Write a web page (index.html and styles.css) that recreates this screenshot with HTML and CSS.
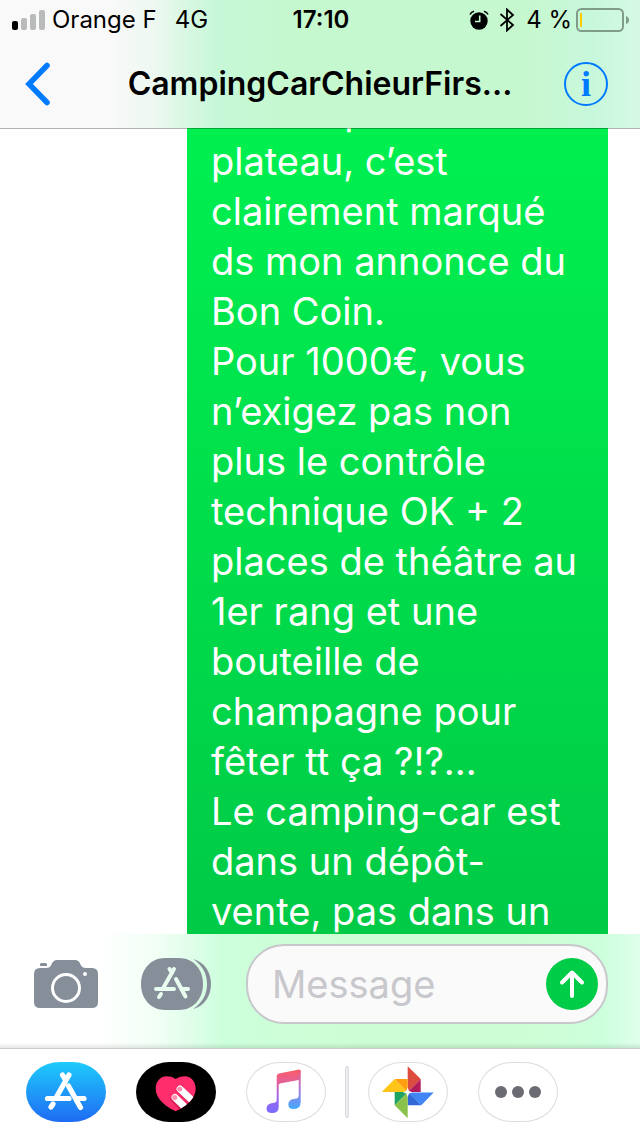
FILE: index.html
```html
<!DOCTYPE html>
<html lang="fr">
<head>
<meta charset="utf-8">
<meta name="viewport" content="width=device-width, initial-scale=1">
<title>CampingCarChieurFirst</title>
<link rel="stylesheet" href="styles.css">
</head>
<body>
<svg class="defs" aria-hidden="true">
  <defs>
    <linearGradient id="note" x1="0" y1="0" x2="0" y2="1">
      <stop offset="0" stop-color="#fb5c64"/><stop offset=".3" stop-color="#e2619b"/><stop offset=".65" stop-color="#9a68f0"/><stop offset="1" stop-color="#7a6cff"/>
    </linearGradient>
    <linearGradient id="note-right" x1="0" y1="0" x2="0" y2="1">
      <stop offset="0" stop-color="#f0567a"/><stop offset=".5" stop-color="#a77fe0"/><stop offset="1" stop-color="#3fa9ff"/>
    </linearGradient>
    <clipPath id="heart"><path d="M39.700 17C42.500 15 46 14.300 49 14.300C55.500 14.300 59.700 20 59.700 26.500C59.700 38 47 46 39.700 49.300C32.400 46 19.700 38 19.700 26.500C19.700 20 24 14.300 30.400 14.300C33.400 14.300 37 15 39.700 17Z"/></clipPath>
  </defs>
</svg>

<header class="top">
  <div class="status">
    <div class="status-left">
      <svg class="signal" width="34" height="20" viewBox="0 0 34 20" aria-hidden="true">
        <rect x="0" y="11" width="6" height="9" rx="2"/>
        <g fill="#b9bbba"><rect x="9" y="8" width="6" height="12" rx="2"/><rect x="18" y="4" width="6" height="16" rx="2"/><rect x="27" y="0" width="6" height="20" rx="2"/></g>
      </svg>
      <span>Orange F</span><span class="network">4G</span>
    </div>
    <time class="clock">17:10</time>
    <div class="status-right">
      <svg width="20" height="20" viewBox="0 0 20 20" aria-hidden="true">
        <circle cx="10" cy="11" r="8.700"/>
        <path d="M1 4.500Q2 2 5 1.200M19 4.500Q18 2 15 1.200" fill="none" stroke="#000" stroke-width="1.600"/>
        <path d="M10.700 5.500V11.500H6" fill="none" stroke="#c6f8cf" stroke-width="1.600"/>
      </svg>
      <svg class="bluetooth" width="16" height="24" viewBox="0 0 16 24" aria-hidden="true">
        <path d="M1.500 6L14 17L8 22.500V1.500L14 7L1.500 18" fill="none" stroke="#000" stroke-width="1.800"/>
      </svg>
      <span>4 %</span>
      <svg class="battery" width="54" height="24" viewBox="0 0 54 24" aria-hidden="true">
        <rect x="1" y="1" width="46" height="22" rx="4.500" fill="none" stroke="#829c8a" stroke-width="2"/>
        <rect x="4" y="5" width="2" height="14" fill="#ffcc00"/>
        <path d="M50 8Q53 9 53 12Q53 15 50 16Z" fill="#829c8a"/>
      </svg>
    </div>
  </div>
  <nav class="nav">
    <button class="icon-button back" aria-label="Retour">
      <svg width="26" height="44" viewBox="0 0 26 44"><path d="M23 3.500L5 22L23 40.500" fill="none" stroke="#007aff" stroke-width="5.500" stroke-linecap="round" stroke-linejoin="miter"/></svg>
    </button>
    <h1 class="title">CampingCarChieurFirs...</h1>
    <button class="info" aria-label="Informations">i</button>
  </nav>
</header>

<main class="thread">
  <p class="bubble">voir un petit<br>plateau, c’est<br>clairement marqué<br>ds mon annonce du<br>Bon Coin.<br>Pour 1000€, vous<br>n’exigez pas non<br>plus le contrôle<br>technique OK + 2<br>places de théâtre au<br>1er rang et une<br>bouteille de<br>champagne pour<br>fêter tt ça ?!?...<br>Le camping-car est<br>dans un dépôt-<br>vente, pas dans un</p>
</main>

<form class="compose">
  <button type="button" class="icon-button" aria-label="Appareil photo">
    <svg width="64" height="48" viewBox="0 0 64 48">
      <path fill="#868e99" d="M6 8H12Q16 8 17.500 4.500Q19 0 23 0H41Q45 0 46.500 4.500Q48 8 52 8H58Q64 8 64 14V42Q64 48 58 48H6Q0 48 0 42V14Q0 8 6 8ZM6 6V4.500Q6 3 7.500 3H11.500Q13 3 13 4.500V6Z"/>
      <circle cx="32" cy="28" r="13.500" fill="none" stroke="#fff" stroke-width="3"/>
      <circle cx="51" cy="14" r="2" fill="#fff"/>
    </svg>
  </button>
  <button type="button" class="icon-button apps" aria-label="Apps">
    <svg width="70" height="52" viewBox="0 0 70 52">
      <path fill="#868e99" d="M24 0H38C52 0 62 11 62 26S52 52 38 52H24C10 52 0 41 0 26S10 0 24 0Z"/>
      <path fill="#868e99" d="M52 1C64 4 70 15 70 26S64 48 52 51C61 45 66 37 66 26S61 7 52 1Z"/>
      <g fill="none" stroke="#e8fdef" stroke-width="4" stroke-linecap="round">
        <path d="M33 11L22.500 29.500M28.500 11L31 15M15 31H33M41 31H47M20 36L18 39"/>
        <path d="M35 21L44.500 38.500"/>
      </g>
    </svg>
  </button>
  <div class="field">
    <input class="field-input" type="text" placeholder="Message" aria-label="Message">
    <button type="submit" class="send" aria-label="Envoyer">
      <svg width="28" height="30" viewBox="0 0 28 30"><path d="M14 27V4M4 13.500L14 3.500L24 13.500" fill="none" stroke="#fff" stroke-width="4" stroke-linecap="round" stroke-linejoin="round"/></svg>
    </button>
  </div>
</form>

<footer class="drawer">
  <button class="app app-store" aria-label="App Store">
    <svg width="80" height="60" viewBox="0 0 80 60"><g fill="none" stroke="#fff" stroke-width="5.200" stroke-linecap="round">
      <path d="M43 13L31 34M36.500 13L39.500 18M21.500 36.500H43M52 36.500H58M27 42L25 45"/><path d="M42.500 24L54.500 45.500"/></g></svg>
  </button>
  <button class="app app-touch" aria-label="Digital Touch">
    <svg width="80" height="60" viewBox="0 0 80 60"><g clip-path="url(#heart)">
      <rect width="80" height="60" fill="#ff2d6b"/>
      <g stroke-width="8" stroke-linecap="round"><path d="M44 27L62 45" stroke="#d51e55"/><path d="M38.500 37L56 54" stroke="#d51e55"/>
      <path d="M44 27L62 44M39 35.500L57 53" stroke="#fff" stroke-width="7"/></g>
      <circle cx="43.700" cy="27" r="2.500" fill="#ff8fb0"/><circle cx="38.700" cy="35.500" r="2.500" fill="#ff8fb0"/></g></svg>
  </button>
  <button class="app" aria-label="Musique">
    <svg width="80" height="60" viewBox="0 0 80 60">
      <path fill="url(#note)" d="M30.700 14Q30.700 12 33 11.500L53 7.500Q54.700 7.300 54.700 9L52.700 18L34 21.500Q32.700 22 32.700 23V45Q32.700 51 26 51Q20.500 51 20.500 46.500Q20.500 41.500 27 41Q30.700 40.500 30.700 38Z"/>
      <path fill="url(#note-right)" d="M54.700 9V40Q54.700 47 48 47Q42.300 47 42.300 42.500Q42.300 37.500 49 36.800Q52.700 36.400 52.700 33.500V9Z"/>
    </svg>
  </button>
  <span class="divider"></span>
  <button class="app" aria-label="Google Photos">
    <svg width="80" height="60" viewBox="0 0 80 60">
      <path fill="#db4c3f" d="M39.700 4.300L52.700 17L39.700 30Z"/><path fill="#b31b5c" d="M52.700 17V30H39.700Z"/>
      <path fill="#4285f4" d="M39.700 30.500H65.700L53.300 43.300Z"/><path fill="#3367d6" d="M39.700 30L53.300 43.300H39.700Z"/>
      <path fill="#8bc34a" d="M39.700 30V56.300L26.700 43.300Z"/><path fill="#1da362" d="M39.700 30L26.700 43.300V30Z"/>
      <path fill="#ffc518" d="M39.700 30H13.700L26.700 17Z"/><path fill="#ff9e0f" d="M39.700 30L26.700 17H39.700Z"/>
      <path fill="#fff" d="M39.700 25.500L41 29L44.500 30.200L41 31.500L39.700 35L38.400 31.500L35 30.200L38.400 29Z"/>
    </svg>
  </button>
  <button class="app" aria-label="Plus">
    <svg width="80" height="60" viewBox="0 0 80 60" fill="#6b6b73"><circle cx="23" cy="30" r="6"/><circle cx="40" cy="30" r="6"/><circle cx="57" cy="30" r="6"/></svg>
  </button>
</footer>
</body>
</html>
```

FILE: styles.css
```css
* { box-sizing: border-box; }

body {
  margin: 0;
  height: 100vh;
  display: flex;
  flex-direction: column;
  overflow: hidden;
  background: #fff;
  color: #000;
  font-family: Inter, "Liberation Sans", sans-serif;
}

button {
  padding: 0;
  border: 0;
  background: none;
  font: inherit;
  cursor: pointer;
}

svg { display: block; flex: none; }

.defs { position: absolute; width: 0; height: 0; }

.top {
  position: relative;
  z-index: 1;
  flex: none;
  background: linear-gradient(90deg, #f9f9f9 17%, #eef8f1 24%, #d9f8e3 29%, #c6f8d8 34%, #c6f8cf 45%, #c6f8cf 82%, #c8f8dc 93%, #d6f8e5 100%);
  box-shadow: 0 1px rgba(0, 0, 0, 0.3);
}

.status {
  display: grid;
  grid-template-columns: 1fr auto 1fr;
  align-items: center;
  height: 40px;
  padding: 0 10px 0 12px;
  font-size: 24px;
  line-height: 40px;
  white-space: nowrap;
}

.status-left, .status-right { display: flex; align-items: center; }
.status-left { gap: 6px; }
.status-right { justify-content: flex-end; }
.network { margin-left: 12px; }
.clock { font-weight: 600; }
.bluetooth { margin: 0 11px 0 10px; }
.battery { margin-left: 4px; }

.nav {
  display: flex;
  align-items: center;
  height: 88px;
  padding: 0 32px 0 24px;
}

.back { width: 52px; }

.title {
  flex: 1;
  margin: 0;
  font-size: 32px;
  font-weight: 600;
  line-height: 40px;
  text-align: center;
  white-space: nowrap;
}

.info {
  width: 44px;
  height: 44px;
  border: 2px solid #007aff;
  border-radius: 50%;
  color: #007aff;
  font: bold 36px/38px "Liberation Serif", serif;
}

.thread {
  display: flex;
  flex: 1;
  justify-content: flex-end;
  min-height: 0;
  margin-top: -42px;
  padding-right: 32px;
}

.bubble {
  width: 421px;
  margin: 0;
  padding: 0 24px;
  overflow: hidden;
  background: linear-gradient(#00f250, #00ca46);
  color: #fff;
  font-size: 38px;
  line-height: 50px;
  white-space: nowrap;
}

.compose {
  position: relative;
  display: flex;
  flex: none;
  align-items: center;
  padding: 10px 32px 24px 34px;
  background:
    linear-gradient(transparent calc(100% - 5px), rgba(0, 0, 0, 0.1)),
    linear-gradient(90deg, #fff 15%, #f3fff6 24%, #dffee9 30%, #ccffdc 35%, #cdfdd2 55%, #cdfdd2 80%, #ccffdc 94%, #dfffec 100%);
}

.icon-button { flex: none; }
.apps { margin: 0 35px 0 43px; }

.field {
  display: flex;
  flex: 1;
  align-items: center;
  min-width: 0;
  height: 80px;
  padding: 0 8px 0 24px;
  border: 2px solid #c7c7cc;
  border-radius: 38px;
  background: #fafafa;
}

.field-input {
  flex: 1;
  min-width: 0;
  padding: 0;
  border: 0;
  outline: 0;
  background: none;
  font: 38px/50px Inter, "Liberation Sans", sans-serif;
}

.field-input::placeholder { color: #c7c7cc; opacity: 1; }

.send {
  display: grid;
  flex: none;
  place-items: center;
  width: 52px;
  height: 52px;
  border-radius: 50%;
  background: #00cc47;
}

.drawer {
  display: flex;
  flex: none;
  gap: 30px;
  align-items: center;
  padding: 13px 26px 14px;
  border-top: 1px solid #ccc;
  background: #fff;
}

.app {
  flex: none;
  width: 80px;
  height: 60px;
  overflow: hidden;
  border-radius: 34px / 30px;
  box-shadow: inset 0 0 0 1px #dcdcde;
}

.app-store { background: linear-gradient(#1ecbfb, #1f6bf3); box-shadow: none; }
.app-touch { background: #000; box-shadow: none; }

.divider {
  width: 4px;
  height: 52px;
  margin: 0 -11px;
  border: 1px solid #dcdce2;
  border-radius: 2px;
  background: #ebebf0;
}
```
